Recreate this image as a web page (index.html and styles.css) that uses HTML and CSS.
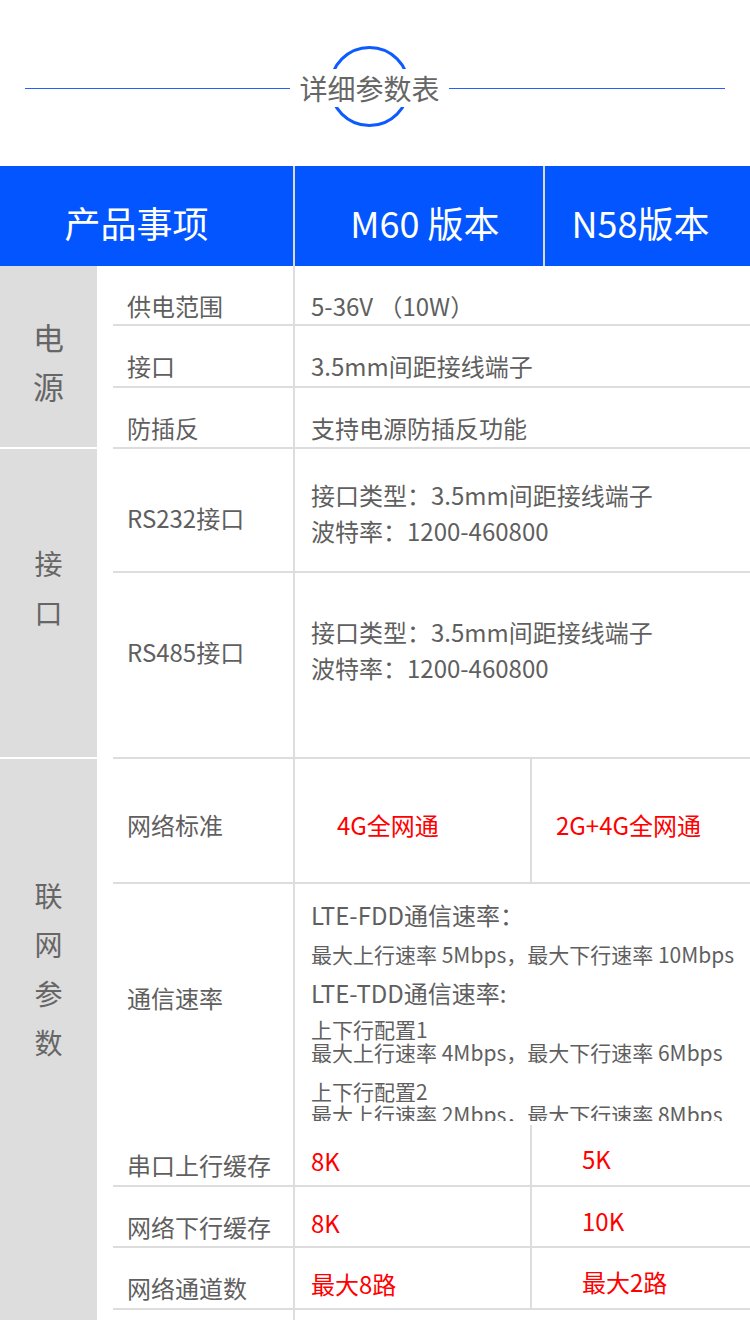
FILE: index.html
```html
<!DOCTYPE html>
<html lang="zh-CN">
<head>
    <meta charset="UTF-8">
    <meta name="viewport" content="width=device-width, initial-scale=1.0">
    <title>详细参数表</title>

    <link rel="stylesheet" href="styles.css">
</head>
<body>

    <div class="title-bar">
        <span class="title-line left"></span>
        <h2 class="title"><span>详细参数表</span></h2>
        <span class="title-line"></span>
    </div>

    <div class="table-head">
        <div class="head-cell head-item">产品事项</div>
        <div class="head-cell head-m60">M60 版本</div>
        <div class="head-cell head-n58">N58版本</div>
    </div>

    <!-- 电源 -->
    <div class="group">
        <div class="cat cat-power"><span>电源</span></div>
        <div class="rows">
            <div class="row h58">
                <div class="label">供电范围</div>
                <div class="val">5-36V （10W）</div>
            </div>
            <div class="row h60">
                <div class="label">接口</div>
                <div class="val">3.5mm间距接线端子</div>
            </div>
            <div class="row h59">
                <div class="label">防插反</div>
                <div class="val">支持电源防插反功能</div>
            </div>
        </div>
    </div>

    <!-- 接口 -->
    <div class="group">
        <div class="cat cat-iface"><span>接口</span></div>
        <div class="rows">
            <div class="row rs232">
                <div class="label">RS232接口</div>
                <div class="val multi">接口类型：3.5mm间距接线端子<br>波特率：1200-460800</div>
            </div>
            <div class="row rs485">
                <div class="label">RS485接口</div>
                <div class="val multi">接口类型：3.5mm间距接线端子<br>波特率：1200-460800</div>
            </div>
        </div>
    </div>

    <!-- 联网参数 -->
    <div class="group">
        <div class="cat cat-net"><span>联网参数</span></div>
        <div class="rows">
            <div class="row net-std">
                <div class="label">网络标准</div>
                <div class="val m60 red">4G全网通</div>
                <div class="val n58 red">2G+4G全网通</div>
            </div>
            <div class="row rate">
                <div class="label">通信速率</div>
                <div class="val rate-val">
                    <p class="rate-head">LTE-FDD通信速率：</p>
                    <p class="rate-line">最大上行速率 5Mbps，最大下行速率 10Mbps</p>
                    <p class="rate-head">LTE-TDD通信速率:</p>
                    <p class="rate-cfg first">上下行配置1<br>最大上行速率 4Mbps，最大下行速率 6Mbps</p>
                    <p class="rate-cfg">上下行配置2<br>最大上行速率 2Mbps，最大下行速率 8Mbps</p>
                </div>
            </div>
            <div class="row h60 short">
                <div class="label">串口上行缓存</div>
                <div class="val m60 red">8K</div>
                <div class="val n58 red">5K</div>
            </div>
            <div class="row h59 short">
                <div class="label">网络下行缓存</div>
                <div class="val m60 red">8K</div>
                <div class="val n58 red">10K</div>
            </div>
            <div class="row h60 short">
                <div class="label">网络通道数</div>
                <div class="val m60 red">最大8路</div>
                <div class="val n58 red">最大2路</div>
            </div>
            <div class="row h60">
                <div class="label"></div>
                <div class="val"></div>
            </div>
        </div>
    </div>

</body>
</html>
```

FILE: styles.css
```css
body {
    font-family: "Noto Sans CJK SC", "Noto Sans", sans-serif;
    margin: 0;
    padding: 0;
    background-color: #fff;
    color: #5f5f5f;
    width: 750px;
}

/* Title with the ring behind it */
.title-bar {
    height: 166px;
    box-sizing: border-box;
    padding: 10px 25px 0;
    display: flex;
    align-items: center;
}

.title-line {
    flex: 1;
    height: 1px;
    background-color: #1f63ff;
}

.title-line.left {
    flex: none;
    width: 265px;
}

.title {
    position: relative;
    width: 159px;
    margin: 0;
    font-size: 28px;
    font-weight: normal;
    color: #666;
    text-align: center;
}

.title::before {
    content: "";
    position: absolute;
    left: 39px;
    top: -23px;
    width: 75px;
    height: 75px;
    border: 3px solid #0d5bff;
    border-radius: 50%;
}

.title span {
    position: relative;
    display: block;
    line-height: 38px;
    background-color: #fff;
}

/* Blue header row */
.table-head {
    display: flex;
    height: 100px;
    background-color: #0356ff;
    color: #fff;
    font-size: 36px;
}

.head-cell {
    display: flex;
    align-items: center;
    justify-content: center;
    box-sizing: border-box;
    padding-top: 12px;
}

.head-item {
    width: 295px;
    padding-right: 20px;
    border-right: 2px solid #d9d9d9;
}

.head-m60 {
    width: 250px;
    padding-left: 12px;
    border-right: 2px solid #d9d9d9;
}

.head-n58 {
    flex: 1;
    padding-right: 14px;
}

/* Body groups */
.group {
    display: flex;
}

.cat {
    width: 97px;
    flex-shrink: 0;
    background-color: #dddddd;
    border-bottom: 2px solid #fff;
    color: #666;
    font-size: 28px;
}

.cat span {
    display: block;
    width: 1em;
    margin: 0 auto;
    line-height: 49px;
}

.cat-power {
    font-size: 31px;
    padding-top: 46px;
}

.cat-iface {
    padding-top: 90px;
}

.cat-net {
    padding-top: 112px;
}

.rows {
    flex: 1;
    padding-left: 16px;
}

.row {
    display: flex;
    border-bottom: 2px solid #dddddd;
    font-size: 24px;
    line-height: 30px;
}

.h58 { height: 58px; }
.h59 { height: 59px; }
.h60 { height: 60px; }

.label {
    width: 182px;
    flex-shrink: 0;
    box-sizing: border-box;
    padding: 25px 0 0 14px;
    border-right: 2px solid #dddddd;
}

.val {
    flex: 1;
    padding: 25px 0 0 16px;
}

.multi {
    line-height: 36px;
}

.rs232 { height: 122px; }
.rs232 .label { padding-top: 54px; }
.rs232 .val { padding-top: 28px; }

.rs485 { height: 184px; }
.rs485 .label { padding-top: 64px; }
.rs485 .val { padding-top: 41px; }

/* Two version columns */
.m60 {
    flex: none;
    width: 237px;
    box-sizing: border-box;
    border-right: 2px solid #dddddd;
}

.n58 {
    box-sizing: border-box;
}

.red {
    color: #ff0000;
}

.net-std {
    height: 123px;
}

.net-std .label,
.net-std .val {
    padding-top: 51px;
}

.net-std .m60 { padding-left: 42px; }
.net-std .n58 { padding-left: 24px; }

.short .m60 { padding-top: 21px; }
.short .n58 { padding-top: 19px; padding-left: 50px; }

/* Rate row: content runs out of its own box */
.rate {
    height: 241px;
    border-bottom: none;
}

.rate .label {
    padding-top: 99px;
}

.rate-val {
    height: 237px;
    box-sizing: border-box;
    overflow: hidden;
    padding-top: 12px;
    white-space: nowrap;
}

.rate-val p {
    margin: 0;
}

.rate-head {
    font-size: 24px;
    line-height: 38px;
}

.rate-line {
    font-size: 21px;
    line-height: 40px;
}

.rate-cfg {
    font-size: 21px;
    line-height: 23px;
    margin-top: 16px !important;
}

.rate-cfg.first {
    margin-top: 6px !important;
}
```
